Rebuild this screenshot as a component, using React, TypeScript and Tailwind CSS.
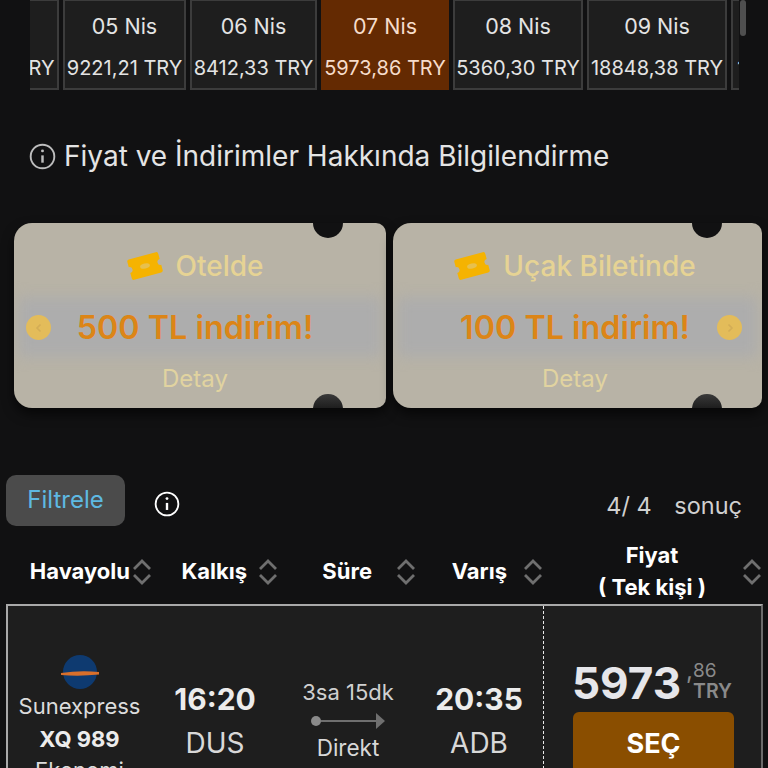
import React from 'react';

const dates = [
  { day: '04 Nis', price: '7310,45 TRY', width: 'w-[128px]' },
  { day: '05 Nis', price: '9221,21 TRY', width: 'w-[123px]' },
  { day: '06 Nis', price: '8412,33 TRY', width: 'w-[127px]' },
  { day: '07 Nis', price: '5973,86 TRY', width: 'w-[128px]', active: true },
  { day: '08 Nis', price: '5360,30 TRY', width: 'w-[130px]' },
  { day: '09 Nis', price: '18848,38 TRY', width: 'w-[140px]' },
  { day: '10 Nis', price: '12040,10 TRY', width: 'w-[140px]' },
];

const InfoIcon = ({ className }: { className: string }) => (
  <svg viewBox="0 0 24 24" fill="none" stroke="currentColor" strokeWidth="1.7" className={className}>
    <circle cx="12" cy="12" r="10.5" />
    <path d="M12 11v6.5" strokeWidth="2.2" />
    <circle cx="12" cy="7" r="1.3" fill="currentColor" stroke="none" />
  </svg>
);

const SortIcon = () => (
  <svg viewBox="0 0 20 26" fill="none" stroke="#6f6f6f" strokeWidth="2.8" className="h-[26px] w-[20px] shrink-0">
    <path d="M2 10 10 2l8 8" />
    <path d="M2 16l8 8 8-8" />
  </svg>
);

const TicketIcon = () => (
  <svg viewBox="0 0 36 30" className="h-[30px] w-[36px] shrink-0">
    <g transform="rotate(-15 18 15)">
      <path
        d="M4 4.500h28a2 2 0 0 1 2 2V12a3 3 0 0 0 0 6v5.500a2 2 0 0 1-2 2H4a2 2 0 0 1-2-2V18a3 3 0 0 0 0-6V6.500a2 2 0 0 1 2-2z"
        fill="#f5b301"
      />
      <ellipse cx="18" cy="15" rx="5" ry="2.500" fill="#e7c04e" />
    </g>
  </svg>
);

const ArrowDot = ({ className, dir }: { className: string; dir: 'left' | 'right' }) => (
  <span className={`absolute top-[92px] flex h-[25px] w-[25px] items-center justify-center rounded-full bg-[#e3bc5a] ${className}`}>
    <svg viewBox="0 0 10 10" fill="none" stroke="#d3ad56" strokeWidth="1.6" className="h-[10px] w-[10px]">
      <path d={dir === 'left' ? 'M6.500 1.500 3 5l3.500 3.500' : 'M3.500 1.500 7 5 3.500 8.500'} />
    </svg>
  </span>
);

const Ticket = ({
  title,
  amount,
  side,
  width,
  notch,
  pad,
}: {
  title: string;
  amount: string;
  side: 'left' | 'right';
  width: string;
  notch: string;
  pad: string;
}) => (
  <div className={`relative h-[185px] ${width} shrink-0 overflow-hidden rounded-l-[18px] rounded-r-[10px] bg-[#b8b3a6] shadow-[0_6px_12px_rgba(0,0,0,0.6)]`}>
    <div className="absolute inset-x-[4px] top-[74px] h-[60px] bg-[#adadad] blur-[7px]" />
    <div className={`absolute -top-[1px] ${notch} h-[16px] w-[30px] rounded-b-full bg-[#111112]`} />
    <div className={`absolute -bottom-[1px] ${notch} h-[15px] w-[30px] rounded-t-full bg-linear-to-b from-[#3a3a3a] to-[#1c1c1c]`} />
    {side === 'left' && <ArrowDot className="left-[12px]" dir="left" />}
    {side === 'right' && <ArrowDot className="right-[20px]" dir="right" />}
    <div className={`relative pt-[24px] ${pad}`}>
      <div className="flex h-[38px] items-center justify-center gap-[13px]">
        <TicketIcon />
        <span className="text-[28px] font-medium text-[#e6d394]">{title}</span>
      </div>
      <div className="mt-[13px] flex h-[60px] items-center justify-center">
        <span className="text-[32.300px] font-semibold text-[#dc8517]">{amount}</span>
      </div>
      <p className="mt-[3px] text-center text-[24px] text-[#e1d3a0]">Detay</p>
    </div>
  </div>
);

const HeaderCell = ({ label, width, gap }: { label: string; width: string; gap: string }) => (
  <div className={`flex ${width} items-center justify-end ${gap}`}>
    <span className="text-[22px] font-bold text-white">{label}</span>
    <SortIcon />
  </div>
);

export default function App() {
  return (
    <div className="relative h-[768px] w-[768px] overflow-hidden bg-[#111112] font-['Inter',sans-serif]">
      <div className="absolute right-[22px] top-0 h-[36px] w-[6px] rounded-full bg-[#4f4f4f]" />

      <div className="ml-[30px] w-[709px] overflow-hidden">
        <div className="-ml-[99px] -mt-[1px] flex h-[91px] gap-[4px]">
          {dates.map((d) => (
            <div
              key={d.day}
              className={`flex ${d.width} shrink-0 flex-col items-center border-2 pt-[12px] ${
                d.active ? 'border-[#642a02] bg-[#642a02] text-[#f6dccb]' : 'border-[#3c3c3c] bg-[#1e1e1e] text-[#e4e4e4]'
              }`}
            >
              <span className="text-[21.500px] leading-[26px]">{d.day}</span>
              <span className="mt-[16px] whitespace-nowrap text-[20px] leading-[26px]">{d.price}</span>
            </div>
          ))}
        </div>
      </div>

      <div className="ml-[29px] mt-[48px] flex h-[36px] items-center gap-[8px] text-[#e4e4e4]">
        <InfoIcon className="h-[27px] w-[27px] text-[#bdbdbd]" />
        <h2 className="whitespace-nowrap text-[28px] font-normal">Fiyat ve İndirimler Hakkında Bilgilendirme</h2>
      </div>

      <div className="ml-[14px] mt-[49px] flex gap-[7px]">
        <Ticket title="Otelde" amount="500 TL indirim!" side="left" width="w-[372px]" notch="right-[43px]" pad="pr-[10px]" />
        <Ticket title="Uçak Biletinde" amount="100 TL indirim!" side="right" width="w-[369px]" notch="right-[40px]" pad="pr-[5px]" />
      </div>

      <div className="mt-[67px] flex items-center px-[6px]">
        <button className="h-[51px] w-[119px] rounded-[10px] bg-[#4b4b4b] pb-[2px] text-[24px] text-[#5eb9e2]">Filtrele</button>
        <InfoIcon className="ml-[29px] mt-[6px] h-[26px] w-[26px] text-white" />
        <span className="ml-auto mr-[20px] mt-[11px] text-[23.500px] text-[#d0d0d0]">
          4/ 4 <span className="ml-[16px]">sonuç</span>
        </span>
      </div>

      <div className="mt-[13px] flex h-[65px] items-center">
        <HeaderCell label="Havayolu" width="w-[152px]" gap="gap-[2px]" />
        <HeaderCell label="Kalkış" width="w-[126px]" gap="gap-[11px]" />
        <HeaderCell label="Süre" width="w-[138px]" gap="gap-[24px]" />
        <HeaderCell label="Varış" width="w-[127px]" gap="gap-[16px]" />
        <div className="ml-[19px] flex w-[200px] items-center justify-between">
          <div className="-mt-[2px] w-[180px] text-center text-[22px] font-bold leading-[32px] text-white">
            Fiyat
            <br />( Tek kişi )
          </div>
          <SortIcon />
        </div>
      </div>

      <div className="ml-[6px] flex h-[200px] w-[757px] border-2 border-b-0 border-[#a9a9a9] border-r-[#6b6b6b] bg-[#1e1e1e]">
        <div className="flex w-[535px] pt-[47px]">
          <div className="flex w-[143px] flex-col items-center text-[#dcdcdc]">
            <svg viewBox="0 0 38 38" className="h-[38px] w-[38px]">
              <circle cx="19" cy="19" r="17" fill="#0e3a70" />
              <path d="M0 20q19-3 38-1v2.500q-19 2-38 .5z" fill="#d86f2b" />
            </svg>
            <span className="mt-[1px] text-[22px] leading-[28px]">Sunexpress</span>
            <span className="mt-[5px] text-[22px] font-bold leading-[28px] text-[#ececec]">XQ 989</span>
            <span className="mt-[3px] text-[22px] leading-[28px]">Ekonomi</span>
          </div>
          <div className="ml-[8px] flex w-[112px] flex-col items-center pt-[28px]">
            <span className="text-[30px] font-bold leading-[36px] text-[#ececec]">16:20</span>
            <span className="mt-[8px] text-[28px] leading-[36px] text-[#d8d8d8]">DUS</span>
          </div>
          <div className="ml-[9px] flex w-[136px] flex-col items-center pt-[26px]">
            <span className="text-[22px] leading-[26px] text-[#d0d0d0]">3sa 15dk</span>
            <div className="mt-[10px] flex h-[12px] w-[74px] items-center">
              <span className="h-[10px] w-[10px] shrink-0 rounded-full bg-[#8a8a8a]" />
              <span className="h-[2px] flex-1 bg-[#6f6f6f]" />
              <span className="h-0 w-0 border-y-[8px] border-l-[9px] border-y-transparent border-l-[#6f6f6f]" />
            </div>
            <span className="mt-[7px] text-[22.500px] leading-[28px] text-[#d8d8d8]">Direkt</span>
          </div>
          <div className="ml-[7px] flex w-[112px] flex-col items-center pt-[28px]">
            <span className="text-[30px] font-bold leading-[36px] text-[#ececec]">20:35</span>
            <span className="mt-[8px] text-[28px] leading-[36px] text-[#d8d8d8]">ADB</span>
          </div>
        </div>
        <div className="flex-1 border-l border-dashed border-[#e8e8e8] pl-[28px] pt-[51px]">
          <div className="flex h-[52px] items-center">
            <span className="text-[44px] font-bold leading-[52px] text-[#e6e6ea]">5973</span>
            <span className="-mt-[24px] ml-[5px] text-[24px] leading-none text-[#8a8a8a]">,</span>
            <div className="-mt-[4px] flex flex-col text-[#8a8a8a]">
              <span className="text-[19px] leading-[20px]">86</span>
              <span className="text-[19.500px] font-semibold leading-[20px]">TRY</span>
            </div>
          </div>
          <button className="ml-[1px] mt-[3px] h-[64px] w-[161px] rounded-[6px] bg-[#8a4e00] text-[27px] font-bold text-white">SEÇ</button>
        </div>
      </div>
    </div>
  );
}
